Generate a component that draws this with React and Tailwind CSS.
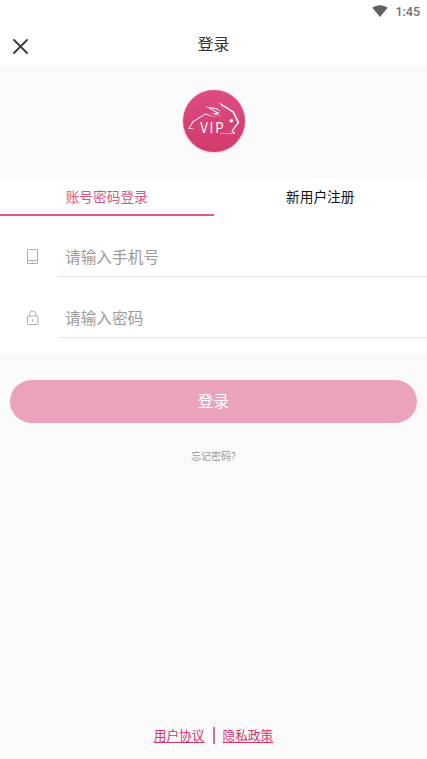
import { useState } from 'react';

const tabs = [
  { id: 'login', label: '账号密码登录' },
  { id: 'register', label: '新用户注册' },
];

const PhoneIcon = () => (
  <svg className="w-3 h-4 -mt-0.5" viewBox="0 0 12 16" fill="none" stroke="#a6a6a6" strokeWidth="0.9">
    <rect x="0.5" y="0.5" width="10" height="14" rx="0.3" />
    <path d="M0.5 11.5h10" />
    <path d="M4.7 13.2h1.6" />
  </svg>
);

const LockIcon = () => (
  <svg className="w-3 h-4 -mt-0.5" viewBox="0 0 12 16" fill="none" stroke="#a6a6a6" strokeWidth="0.9">
    <rect x="0.5" y="6" width="10.5" height="8.5" rx="1" />
    <path d="M2.5 6V4.2a3.2 3.2 0 0 1 6.4 0V6" />
    <path d="M5.7 9v3" />
  </svg>
);

const Logo = () => (
  <svg className="w-[70px] h-[70px]" viewBox="0 0 70 70" fill="none">
    <defs>
      <linearGradient id="logoFill" x1="0" y1="0" x2="0" y2="1">
        <stop offset="0" stopColor="#dc4c84" />
        <stop offset="1" stopColor="#d23a69" />
      </linearGradient>
    </defs>
    <circle cx="35" cy="35.5" r="32.2" fill="#f6c5d5" opacity="0.55" />
    <circle cx="35" cy="35" r="31" fill="url(#logoFill)" />
    {/* Silueta */}
    <g fill="#fff">
      <path d="M9.2 43L13.4 35.4L26.3 27.4L38.2 31.8L26.3 28.4L14.3 36.1L10.6 42.3L14.6 42.5V43.1Z" />
      <path d="M43.5 31L32.5 27.2L37.6 26.8L26.5 20.4L38 22.2L42.2 26.3L37.3 23.2L30.5 22L41.3 27.6L36.5 27.8Z" />
      <path d="M40.4 16.4L54.9 25.5L60.3 36.4L53.8 45L56.8 47.6H41V46.9L54.2 46.9L52.3 45.2L58.4 36.6L53.7 26.6L42.4 19.3L47 27.4Z" />
      <circle cx="52.3" cy="34.8" r="1.8" />
    </g>
    <g transform="translate(21.2 47.3) scale(0.88 1)">
      <text fill="#fff" fontSize="15" letterSpacing="2" fontFamily="'Noto Sans CJK SC', sans-serif">
        VIP
      </text>
    </g>
  </svg>
);

const Field = ({ icon, ...props }) => (
  <label className="flex h-[61px] items-end">
    <span className="w-[58px] h-[39px] pl-[27px] flex items-center">{icon}</span>
    <input
      className="flex-1 min-w-0 h-[39px] pl-[7px] border-b border-[#e4e4e4] bg-transparent text-[15.7px] text-gray-700 placeholder:text-[#9c9c9c] outline-none"
      {...props}
    />
  </label>
);

const App = () => {
  const [tab, setTab] = useState('login');
  const [phone, setPhone] = useState('');
  const [password, setPassword] = useState('');

  return (
    <div className="h-screen flex flex-col bg-[#fafafa] overflow-hidden font-['Roboto','Noto_Sans_CJK_SC',sans-serif]">
      <header className="h-[65px] shrink-0 bg-white">
        <div className="h-6 flex justify-end items-center pr-[7px] text-[12.5px] font-medium text-[#707070]">
          <svg className="w-4 h-3 mr-[7px] -mt-0.5" viewBox="0 0 16 12" fill="#606060">
            <path d="M0.3 2.7C4.8 -0.7 11.2 -0.7 15.7 2.7L8 12Z" />
          </svg>
          <span>1:45</span>
        </div>
        <div className="h-[41px] grid grid-cols-[41px_1fr_41px] items-center">
          <button type="button" aria-label="关闭" className="pl-3 pt-1">
            <svg className="w-[17px] h-[17px]" viewBox="0 0 17 17" stroke="#3c3c3c" strokeWidth="1.9" strokeLinecap="round">
              <path d="M2 2l13 13M15 2L2 15" />
            </svg>
          </button>
          <h1 className="text-center text-base text-[#333]">登录</h1>
        </div>
      </header>

      <div className="h-[114px] shrink-0 flex justify-center items-center pb-0.5">
        <Logo />
      </div>

      <div className="shrink-0 h-[174px] bg-white">
        <div className="flex h-[37px]">
          {tabs.map((item) => (
            <button
              key={item.id}
              type="button"
              onClick={() => setTab(item.id)}
              className={`flex-1 pt-0.5 border-b-2 text-[13.7px] ${
                tab === item.id ? 'border-[#dc5a88] text-[#dc5584]' : 'border-transparent text-[#111]'
              }`}
            >
              {item.label}
            </button>
          ))}
        </div>
        <Field icon={<PhoneIcon />} type="tel" placeholder="请输入手机号" value={phone} onChange={(e) => setPhone(e.target.value)} />
        <Field icon={<LockIcon />} type="password" placeholder="请输入密码" value={password} onChange={(e) => setPassword(e.target.value)} />
      </div>

      {/* Acciones */}
      <div className="flex flex-col items-center px-2.5 pt-[27px]">
        <button type="button" className="w-full h-[43px] pt-0.5 rounded-full bg-[#eba3bb] text-white text-[15.5px]">
          登录
        </button>
        <a className="mt-[26px] text-[10px] leading-4 text-[#999]">忘记密码?</a>
      </div>

      <footer className="mt-auto h-12 flex justify-center items-center text-[12.7px] text-[#d8326b]">
        <a className="pt-0.5 underline underline-offset-2">用户协议</a>
        <span className="w-0.5 h-[17px] mx-2 bg-[#df6c93]"></span>
        <a className="pt-0.5 underline underline-offset-2">隐私政策</a>
      </footer>
    </div>
  );
};

export default App;
